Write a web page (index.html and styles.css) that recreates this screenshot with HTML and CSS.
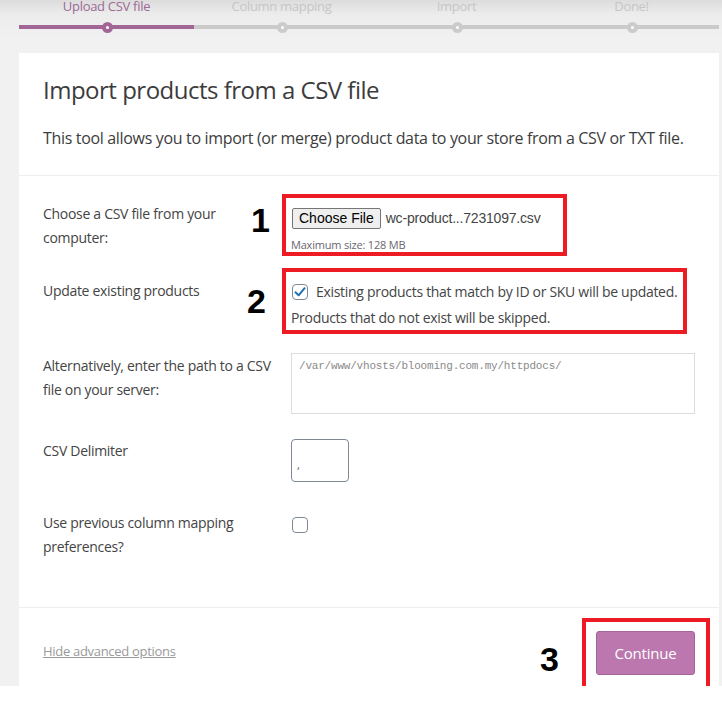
FILE: index.html
```html
<!DOCTYPE html>
<html lang="en">
<head>
<meta charset="utf-8">
<title>Import products</title>
<link rel="stylesheet" href="styles.css">
</head>
<body>
<div class="page">
  <ol class="steps">
    <li class="step active"><span>Upload CSV file</span></li>
    <li class="step"><span>Column mapping</span></li>
    <li class="step"><span>Import</span></li>
    <li class="step"><span>Done!</span></li>
  </ol>
  <div class="card">
    <header class="card-head">
      <h2 class="title">Import products from a CSV file</h2>
      <p class="intro">This tool allows you to import (or merge) product data to your store from a CSV or TXT file.</p>
    </header>
    <section class="form">
      <div class="row row-file">
        <div class="label">Choose a CSV file from your computer:</div>
        <div class="field">
          <div class="file">
            <button class="file-btn" type="button">Choose File</button>
            <span class="file-name">wc-product...7231097.csv</span>
          </div>
          <small class="hint">Maximum size: 128 MB</small>
          <span class="mark mark-1"></span>
          <span class="num num-1">1</span>
        </div>
      </div>
      <div class="row row-update">
        <div class="label">Update existing products</div>
        <div class="field">
          <label class="check-line">
            <span class="cb checked"><svg viewBox="0 0 16 16" width="16" height="16"><path d="M3.5 8.2 L6.6 11.3 L12.6 4.2" fill="none" stroke="#2271b1" stroke-width="2" stroke-linecap="round" stroke-linejoin="round"/></svg></span>
            <span>Existing products that match by ID or SKU will be updated.</span>
          </label>
          <div class="check-sub">Products that do not exist will be skipped.</div>
          <span class="mark mark-2"></span>
          <span class="num num-2">2</span>
        </div>
      </div>
      <div class="row row-path">
        <div class="label">Alternatively, enter the path to a CSV file on your server:</div>
        <div class="field">
          <div class="textarea">/var/www/vhosts/blooming.com.my/httpdocs/</div>
        </div>
      </div>
      <div class="row row-delim">
        <div class="label">CSV Delimiter</div>
        <div class="field">
          <div class="small-input">,</div>
        </div>
      </div>
      <div class="row row-prev">
        <div class="label">Use previous column mapping preferences?</div>
        <div class="field">
          <span class="cb"></span>
        </div>
      </div>
    </section>
    <footer class="card-foot">
      <a class="hide-link" href="#">Hide advanced options</a>
      <div class="actions">
        <span class="num num-3">3</span>
        <span class="btn-wrap">
          <button class="btn-continue" type="button">Continue</button>
        </span>
      </div>
    </footer>
  </div>
</div>
</body>
</html>
```

FILE: styles.css
```css
*, *::before, *::after { box-sizing: border-box; }
html, body { margin: 0; padding: 0; background: #fff; }
body {
  font-family: "Open Sans", "Noto Sans", sans-serif;
  color: #444;
  width: 722px;
}
.page {
  height: 686px;
  background: linear-gradient(#dcdcdc 0, #ececec 14px, #f1f1f1 40px, #f1f1f1 100%);
  padding: 0 3px 0 19px;
}

/* steps */
.steps {
  list-style: none;
  margin: 0;
  padding: 0;
  display: flex;
  height: 53px;
}
.step {
  flex: 1;
  position: relative;
  text-align: center;
  font-size: 13px;
  color: #c6c6c6;
  letter-spacing: -0.3px;
}
.step span { display: block; line-height: 14px; margin-top: -1px; }
.step.active { color: #9d6a95; }
.step::after {
  content: "";
  position: absolute;
  left: 0; right: 0; top: 25px;
  height: 4px;
  background: #cbcbcb;
}
.step.active::after { background: #a16696; }
.step::before {
  content: "";
  position: absolute;
  left: 50%; top: 22px;
  width: 11px; height: 11px;
  margin-left: -5px;
  border-radius: 50%;
  background: #fff;
  border: 4px solid #cbcbcb;
  z-index: 1;
}
.step.active::before { border-color: #a16696; }

/* card */
.card {
  background: #fff;
  height: 633px;
  display: flex;
  flex-direction: column;
}
.card-head {
  padding: 22px 24px 0;
  border-bottom: 1px solid #eee;
  height: 123px;
}
.title {
  margin: 0;
  font-weight: 400;
  font-size: 24px;
  line-height: 30px;
  color: #3c3c3c;
  letter-spacing: -0.5px;
}
.intro {
  margin: 23px 0 0;
  font-size: 16px;
  line-height: 20px;
  color: #3c3c3c;
  letter-spacing: -0.33px;
  white-space: nowrap;
}

.form {
  padding: 26px 24px 0;
  flex: 1;
}
.row {
  display: flex;
  font-size: 14px;
  line-height: 24px;
  color: #444;
  letter-spacing: -0.3px;
}
.label {
  width: 248px;
  flex: none;
  padding-right: 20px;
}
.field {
  flex: 1;
  position: relative;
}
.row-file { height: 77px; }
.row-update { height: 75px; }
.row-path { height: 85px; }
.row-delim { height: 72px; }
.row-prev { height: 60px; }

.file { display: flex; align-items: center; gap: 5px; padding-top: 4px; }
.file-btn {
  font-family: "Liberation Sans", Arial, sans-serif;
  font-size: 14px;
  padding: 0 6px;
  height: 21px;
  border: 1px solid #767676;
  border-radius: 2px;
  background: #efefef;
  color: #000;
  margin: 0 0 0 1px;
  letter-spacing: 0;
}
.file-name {
  font-family: "Liberation Sans", Arial, sans-serif;
  font-size: 14px;
  color: #444;
  letter-spacing: -0.2px;
}
.hint {
  display: block;
  font-size: 11px;
  line-height: 14px;
  margin-top: 8px;
  color: #6a6670;
  letter-spacing: -0.2px;
}

.check-line {
  display: flex;
  align-items: center;
  gap: 8px;
  padding-top: 5px;
  line-height: 16px;
}
.cb {
  flex: none;
  display: inline-block;
  width: 16px;
  height: 16px;
  border: 1px solid #7e8993;
  border-radius: 4px;
  background: #fff;
  position: relative;
  margin-left: 1px;
}
.cb svg { position: absolute; left: -1px; top: -1px; }
.check-sub { margin-top: 10px; line-height: 16px; }

.textarea {
  margin-top: -1px;
  height: 61px;
  border: 1px solid #ddd;
  padding: 4px 7px;
  font-family: "Liberation Mono", "DejaVu Sans Mono", monospace;
  font-size: 11px;
  line-height: 16px;
  color: #8a8a8a;
  letter-spacing: -0.2px;
}
.small-input {
  margin-top: 0;
  width: 58px;
  height: 43px;
  border: 1px solid #7e8993;
  border-radius: 4px;
  padding: 17px 0 0 5px;
  font-size: 11px;
  line-height: 16px;
  color: #555;
}
.row-prev .cb { margin-top: 6px; }

/* footer */
.card-foot {
  border-top: 1px solid #eee;
  height: 79px;
  padding: 0 24px;
  display: flex;
  align-items: center;
  justify-content: space-between;
}
.hide-link {
  font-size: 13px;
  color: #9a9a9a;
  letter-spacing: -0.3px;
  margin-top: 7px;
}
.actions { display: flex; align-items: center; margin-top: 12px; }
.btn-wrap { position: relative; display: inline-block; }
.btn-continue {
  font-family: "Open Sans", sans-serif;
  font-size: 15px;
  width: 99px;
  height: 44px;
  border: 1px solid #a36597;
  border-radius: 3px;
  background: #bb77ae;
  color: #fff;
  letter-spacing: -0.2px;
}

/* annotations */
.mark {
  position: absolute;
  border: 4px solid #ed1c24;
  pointer-events: none;
}
.mark-1 { left: -9px; top: -8px; width: 285px; height: 62px; }
.mark-2 { left: -9px; top: -11px; width: 405px; height: 66px; }
.btn-wrap::after {
  content: "";
  position: absolute;
  left: -14px; top: -13px;
  width: 128px; height: 72px;
  border: 4px solid #ed1c24;
}
.num {
  font-family: "Liberation Sans", Arial, sans-serif;
  font-weight: 700;
  font-size: 34px;
  line-height: 34px;
  color: #000;
  letter-spacing: 0;
}
.num-1, .num-2 { position: absolute; }
.num-1 { left: -40px; top: 1px; }
.num-2 { left: -44px; top: 5px; }
.num-3 { margin-right: 37px; margin-top: 11px; }
```
